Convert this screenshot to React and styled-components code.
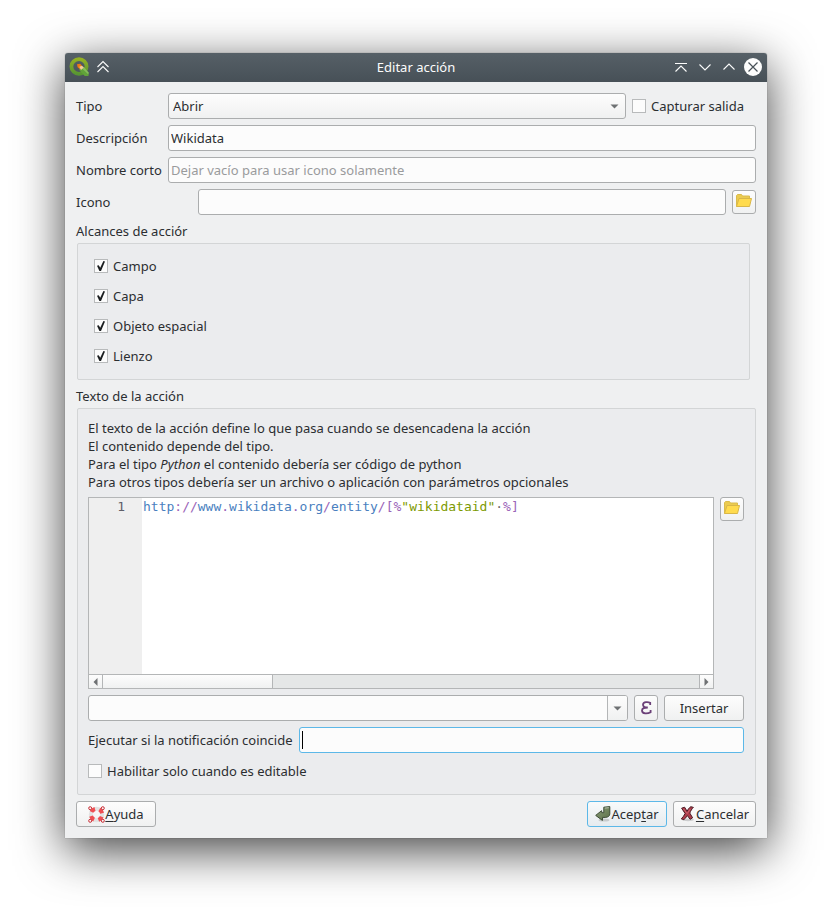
import React from "react";
import styled, { createGlobalStyle, css } from "styled-components";

const GlobalStyle = createGlobalStyle`
  *, *::before, *::after { box-sizing: border-box; }
  body {
    margin: 0;
    background: #fff;
    color: #2b2e31;
    font: 13px/18px "Noto Sans", sans-serif;
  }
  button, input, select { font: inherit; color: inherit; margin: 0; }
`;

const Desktop = styled.main`
  padding: 53px 65px 77px;
`;

const Window = styled.section`
  display: flex;
  flex-direction: column;
  background: #eff0f1;
  border-radius: 3px 3px 0 0;
  box-shadow: 0 0 1px rgba(0, 0, 0, 0.6), 0 12px 48px rgba(0, 0, 0, 0.75);
`;

const TitleBar = styled.header`
  display: grid;
  grid-template-columns: 1fr auto 1fr;
  align-items: center;
  height: 29px;
  padding: 0 4px 2px;
  border-radius: 3px 3px 0 0;
  background: linear-gradient(#566067, #475057);
  color: #fcfcfc;
`;

const Title = styled.h1`
  margin: 0;
  font-size: 13px;
  font-weight: 400;
`;

const TitleTools = styled.div`
  display: flex;
  align-items: center;
  justify-content: ${(p) => (p.$end ? "flex-end" : "flex-start")};
  gap: ${(p) => (p.$end ? "4px" : "2px")};
`;

const TitleButton = styled.button`
  display: flex;
  width: 20px;
  height: 20px;
  padding: 0;
  border: 0;
  background: none;
`;

const Body = styled.form`
  display: flex;
  flex-direction: column;
  padding: 11px;
`;

const Rows = styled.div`
  display: flex;
  flex-direction: column;
  gap: 6px;
`;

const Row = styled.div`
  display: flex;
  align-items: center;
  gap: 6px;
  min-height: 24px;
`;

const FieldLabel = styled.label`
  flex: none;
  width: ${(p) => (p.$wide ? "116px" : "86px")};
  white-space: nowrap;
`;

const frame = css`
  height: 26px;
  border: 1px solid #abadae;
  border-radius: 3px;
`;

const raised = css`
  background: linear-gradient(#fdfdfd, #f0f1f1);
`;

const TextField = styled.input`
  ${frame}
  flex: 1;
  min-width: 0;
  padding: 0 2px;
  background: #fcfcfc;
  outline: none;
  &::placeholder { color: #9a9b9c; opacity: 1; }
`;

const SelectBox = styled.div`
  flex: 1;
  display: grid;
  align-items: center;
  & > * { grid-area: 1 / 1; }
  & > svg { justify-self: end; margin-right: 7px; pointer-events: none; }
`;

const Select = styled.select`
  ${frame}
  ${raised}
  width: 100%;
  padding: 0 4px;
  appearance: none;
  outline: none;
`;

const CheckLabel = styled.label`
  display: flex;
  align-items: center;
  gap: 5px;
  padding-right: ${(p) => (p.$inset ? "12px" : "0")};
  white-space: nowrap;
`;

const CheckBox = styled.input`
  appearance: none;
  display: grid;
  place-items: center;
  width: 14px;
  height: 14px;
  border: 1px solid #b8babb;
  background: #fcfcfc;
  &:checked::before {
    content: "";
    width: 8px;
    height: 10px;
    background: #1b1e20;
    clip-path: polygon(0 48%, 22% 42%, 40% 68%, 80% 0, 100% 6%, 50% 100%, 30% 100%);
  }
`;

const Button = styled.button`
  ${frame}
  ${raised}
  display: flex;
  align-items: center;
  justify-content: center;
  flex: none;
  width: ${(p) => p.$width || "80px"};
  height: ${(p) => (p.$short ? "24px" : "26px")};
  padding: 0;
  white-space: nowrap;
  ${(p) => p.$primary && css`
    border-color: #5cb8e8;
    background: linear-gradient(#f8fafb, #e6ebef);
  `}
`;

const FolderButton = styled(Button)`
  align-items: flex-start;
  padding-top: 3px;
`;

const Key = styled.span`
  text-decoration: underline;
  text-underline-offset: 2px;
  text-decoration-skip-ink: none;
`;

const GroupTitle = styled.h2`
  margin: 7px 0 3px;
  font-size: 13px;
  font-weight: 400;
`;

const Group = styled.fieldset`
  display: flex;
  flex-direction: column;
  gap: ${(p) => (p.$scopes ? "12px" : "6px")};
  min-width: 0;
  margin: 0 ${(p) => (p.$scopes ? "6px" : "0")} 0 1px;
  padding: ${(p) => (p.$scopes ? "13px 16px 14px" : "10px 11px 11px 10px")};
  border: 1px solid #d3d5d6;
  border-radius: 2px;
  background: #ebecee;
`;

const Help = styled.p`
  margin: 0;
`;

const EditorRow = styled.div`
  display: flex;
  align-items: flex-start;
  gap: 6px;
`;

const Editor = styled.div`
  flex: 1;
  min-width: 0;
  border: 1px solid #b4b6b7;
  background: #fff;
`;

const EditorPage = styled.div`
  display: flex;
  min-height: 176px;
  font: 13px/18px "DejaVu Sans Mono", monospace;
`;

const Gutter = styled.div`
  width: 53px;
  padding-right: 17px;
  background: #efefef;
  color: #5f5f68;
  text-align: right;
`;

const Code = styled.div`
  flex: 1;
  padding-left: 1px;
  color: #4a7fc0;
  white-space: pre;
  outline: none;
`;

const Operator = styled.span`
  color: #9a63b8;
`;

const StringText = styled.span`
  color: #7d9a00;
`;

const Blank = styled.span`
  color: #6d6d6c;
`;

const ScrollBar = styled.div`
  display: flex;
  height: 14px;
  border-top: 1px solid #b4b6b7;
  background: #e5e7e7;
`;

const ScrollButton = styled.button`
  ${raised}
  display: grid;
  place-items: center;
  width: 14px;
  padding: 0;
  border: 0 solid #b4b6b7;
  border-${(p) => p.$edge}-width: 1px;
`;

const ScrollTrack = styled.div`
  flex: 1;
`;

const ScrollThumb = styled.div`
  width: 170px;
  height: 100%;
  border-right: 1px solid #b4b6b7;
  ${raised}
`;

const Combo = styled.div`
  ${frame}
  flex: 1;
  display: flex;
  overflow: hidden;
  background: #fcfcfc;
`;

const ComboInput = styled.input`
  flex: 1;
  min-width: 0;
  border: 0;
  padding: 0 2px;
  background: none;
  outline: none;
`;

const ComboButton = styled.button`
  ${raised}
  display: grid;
  place-items: center;
  width: 20px;
  padding: 0;
  border: 0;
  border-left: 1px solid #b4b6b7;
`;

const FocusedField = styled(Combo)`
  align-items: center;
  padding-left: 2px;
  border-color: #5cb8e8;
`;

const Caret = styled.span`
  width: 1px;
  height: 18px;
  background: #000;
`;

const Footer = styled.footer`
  display: flex;
  gap: 6px;
  margin-top: 6px;
`;

const Spacer = styled.div`
  flex: 1;
`;

const DownArrow = () => (
  <svg width="9" height="5" viewBox="0 0 9 5" aria-hidden="true">
    <path d="M0.5 0.5h8L4.5 4.5z" fill="#6e7173" />
  </svg>
);

const SideArrow = ({ left }) => (
  <svg width="5" height="8" viewBox="0 0 5 8" aria-hidden="true">
    <path d={left ? "M4.5 0v8L0.5 4z" : "M0.5 0v8l4-4z"} fill="#6e7173" />
  </svg>
);

const TitleIcon = ({ d }) => (
  <svg width="20" height="20" viewBox="0 0 20 20" fill="none" stroke="#fcfcfc" strokeWidth="1.1" aria-hidden="true">
    <path d={d} />
  </svg>
);

const CloseIcon = () => (
  <svg width="20" height="20" viewBox="0 0 20 20" aria-hidden="true">
    <circle cx="10" cy="10" r="9" fill="#fcfcfc" />
    <path d="M5.5 5.5l9 9M14.5 5.5l-9 9" stroke="#475057" strokeWidth="1.2" />
  </svg>
);

const AppLogo = () => (
  <svg width="22" height="20" viewBox="0 0 22 20" aria-hidden="true">
    <defs>
      <linearGradient id="ring" x1="0" y1="0" x2="0" y2="1">
        <stop offset="0" stopColor="#93b023" />
        <stop offset="1" stopColor="#589632" />
      </linearGradient>
    </defs>
    <ellipse cx="10" cy="9.5" rx="7.6" ry="7.3" fill="none" stroke="url(#ring)" strokeWidth="3.8" />
    <path d="M10.5 8.5l3.2.4 5.8 6.6v3.6h-3.8l-5.4-6z" fill="#61a33a" />
    <path d="M12.5 11l2.5-1 4.5 5.5v2z" fill="#86bd5b" />
    <path d="M8 7.2l3.2-.4 2.3 2.6-2.4 2.9-2.5-2z" fill="#ee7913" />
    <path d="M10.3 9.8l2.6-1 1.8 1.6-2.7 2.7z" fill="#f3c79b" />
  </svg>
);

const FolderIcon = () => (
  <svg width="16" height="14" viewBox="0 0 16 14" aria-hidden="true">
    <path d="M0.5 12.5v-11l1-1h4l1 1.5h7v3" fill="#ebcb50" stroke="#dabb4c" />
    <path d="M3 4.5h12.5l-2 8h-13z" fill="#ffdb4d" stroke="#d9b748" />
  </svg>
);

const EpsilonIcon = () => (
  <svg width="12" height="14" viewBox="0 0 12 14" fill="none" stroke="#6b4078" aria-hidden="true">
    <path d="M10.2 4V1.7C8.4.9 3.2.3 3 3.7c0 2.2 2 2.8 4.8 2.8C4.4 6.5 2 7.2 2 9.6c0 3.8 6 3.2 8.6 1.6V9" strokeWidth="1.8" />
  </svg>
);

const HelpIcon = () => (
  <svg width="17" height="17" viewBox="0 0 17 17" aria-hidden="true">
    <circle cx="8.5" cy="8.5" r="5.7" fill="none" stroke="#e2e2e2" strokeWidth="4" />
    <circle cx="8.5" cy="8.5" r="5.7" fill="none" stroke="#ef4f53" strokeWidth="4" strokeDasharray="4.4 4.553" strokeDashoffset="-2.3" />
    <g fill="#f6f6f6" stroke="#c92d35">
      <circle cx="2.2" cy="2.2" r="1.5" />
      <circle cx="14.8" cy="2.2" r="1.5" />
      <circle cx="2.2" cy="14.8" r="1.5" />
      <circle cx="14.8" cy="14.8" r="1.5" />
    </g>
  </svg>
);

const AcceptIcon = () => (
  <svg width="16" height="16" viewBox="0 0 16 16" aria-hidden="true">
    <defs>
      <linearGradient id="olive" x1="0" y1="0" x2="1" y2="1">
        <stop offset="0" stopColor="#8a9c78" />
        <stop offset="1" stopColor="#5b7047" />
      </linearGradient>
    </defs>
    <ellipse cx="9" cy="14" rx="5.5" ry="1.6" fill="#c8cbcd" />
    <path d="M8.8 1.2l6-.6v7.2c0 2.4-1.8 3.5-4.6 3.6H7.6L7.4 14.4.7 9.4l5.9-4.7.2 2h2z" fill="url(#olive)" stroke="#3d4c36" strokeLinejoin="round" />
    <path d="M9.8 2.1l4-.4" stroke="#b5bfad" fill="none" />
  </svg>
);

const CancelIcon = () => (
  <svg width="16" height="16" viewBox="0 0 16 16" aria-hidden="true">
    <ellipse cx="8" cy="13.8" rx="6" ry="1.4" fill="#cccdce" />
    <path d="M1.6 2.2L4.6 1.2l2.5 4.1C8 3.2 9.4 1.4 10.9.7l2.5.7c-1.6 1.4-2.8 3.6-3.6 5.7l2.8 4.7-2.5 1.5-2.7-3.7c-1 1.6-2.2 3-3.5 4l-2.6-.7C3 11.2 4.200 9.400 5.100 7.500z" fill="#ad3c4a" stroke="#4c1c26" strokeLinejoin="round" />
    <path d="M3.400 2.800l3.700 4.800 3.200-4.500" stroke="#c9636e" fill="none" />
  </svg>
);

const scopes = ["Campo", "Capa", "Objeto espacial", "Lienzo"];

export default function App() {
  return (
    <Desktop>
      <GlobalStyle />
      <Window aria-label="Editar acción">
        <TitleBar>
          <TitleTools>
            <AppLogo />
            <TitleButton aria-label="Mantener encima">
              <TitleIcon d="M4.5 10L10 4.5 15.5 10M4.5 15L10 9.5l5.5 5.5" />
            </TitleButton>
          </TitleTools>
          <Title>Editar acción</Title>
          <TitleTools $end>
            <TitleButton aria-label="Enrollar"><TitleIcon d="M4 6.5h12M4.5 14.5L10 9l5.5 5.5" /></TitleButton>
            <TitleButton aria-label="Minimizar"><TitleIcon d="M4.5 7.5L10 13l5.5-5.5" /></TitleButton>
            <TitleButton aria-label="Maximizar"><TitleIcon d="M4.5 12.5L10 7l5.5 5.5" /></TitleButton>
            <TitleButton aria-label="Cerrar"><CloseIcon /></TitleButton>
          </TitleTools>
        </TitleBar>
        <Body onSubmit={(e) => e.preventDefault()}>
          <Rows>
            <Row>
              <FieldLabel htmlFor="type">Tipo</FieldLabel>
              <SelectBox>
                <Select id="type"><option>Abrir</option></Select>
                <DownArrow />
              </SelectBox>
              <CheckLabel $inset><CheckBox type="checkbox" />Capturar salida</CheckLabel>
            </Row>
            <Row>
              <FieldLabel htmlFor="description">Descripción</FieldLabel>
              <TextField id="description" defaultValue="Wikidata" />
            </Row>
            <Row>
              <FieldLabel htmlFor="short">Nombre corto</FieldLabel>
              <TextField id="short" placeholder="Dejar vacío para usar icono solamente" />
            </Row>
            <Row>
              <FieldLabel htmlFor="icon" $wide>Icono</FieldLabel>
              <TextField id="icon" />
              <FolderButton type="button" $width="24px" $short aria-label="Elegir icono"><FolderIcon /></FolderButton>
            </Row>
          </Rows>

          <GroupTitle id="scopes">Alcances de acciór</GroupTitle>
          <Group $scopes aria-labelledby="scopes">
            {scopes.map((name) => (
              <CheckLabel key={name}><CheckBox type="checkbox" defaultChecked />{name}</CheckLabel>
            ))}
          </Group>

          <GroupTitle id="action">Texto de la acción</GroupTitle>
          <Group aria-labelledby="action">
            <Help>
              El texto de la acción define lo que pasa cuando se desencadena la acción<br />
              El contenido depende del tipo.<br />
              Para el tipo <em>Python</em> el contenido debería ser código de python<br />
              Para otros tipos debería ser un archivo o aplicación con parámetros opcionales
            </Help>
            <EditorRow>
              <Editor>
                <EditorPage>
                  <Gutter>1</Gutter>
                  <Code role="textbox" aria-label="Texto de la acción" contentEditable suppressContentEditableWarning spellCheck={false}>
                    http<Operator>://</Operator>www<Operator>.</Operator>wikidata<Operator>.</Operator>org<Operator>/</Operator>entity<Operator>/[%</Operator><StringText>"wikidataid"</StringText><Blank>·</Blank><Operator>%]</Operator>
                  </Code>
                </EditorPage>
                <ScrollBar>
                  <ScrollButton type="button" $edge="right" aria-label="Izquierda"><SideArrow left /></ScrollButton>
                  <ScrollTrack><ScrollThumb /></ScrollTrack>
                  <ScrollButton type="button" $edge="left" aria-label="Derecha"><SideArrow /></ScrollButton>
                </ScrollBar>
              </Editor>
              <FolderButton type="button" $width="24px" $short aria-label="Elegir archivo"><FolderIcon /></FolderButton>
            </EditorRow>
            <Row>
              <Combo>
                <ComboInput aria-label="Expresión" />
                <ComboButton type="button" aria-label="Mostrar opciones"><DownArrow /></ComboButton>
              </Combo>
              <Button type="button" $width="24px" aria-label="Editor de expresiones"><EpsilonIcon /></Button>
              <Button type="button">Insertar</Button>
            </Row>
            <Row>
              <label htmlFor="notification">Ejecutar si la notificación coincide</label>
              <FocusedField>
                <Caret />
                <ComboInput id="notification" />
              </FocusedField>
            </Row>
            <Row>
              <CheckLabel><CheckBox type="checkbox" />Habilitar solo cuando es editable</CheckLabel>
            </Row>
          </Group>

          <Footer>
            <Button type="button"><HelpIcon /><span><Key>A</Key>yuda</span></Button>
            <Spacer />
            <Button $primary><AcceptIcon /><span>Acep<Key>t</Key>ar</span></Button>
            <Button type="button" $width="83px"><CancelIcon /><span><Key>C</Key>ancelar</span></Button>
          </Footer>
        </Body>
      </Window>
    </Desktop>
  );
}
